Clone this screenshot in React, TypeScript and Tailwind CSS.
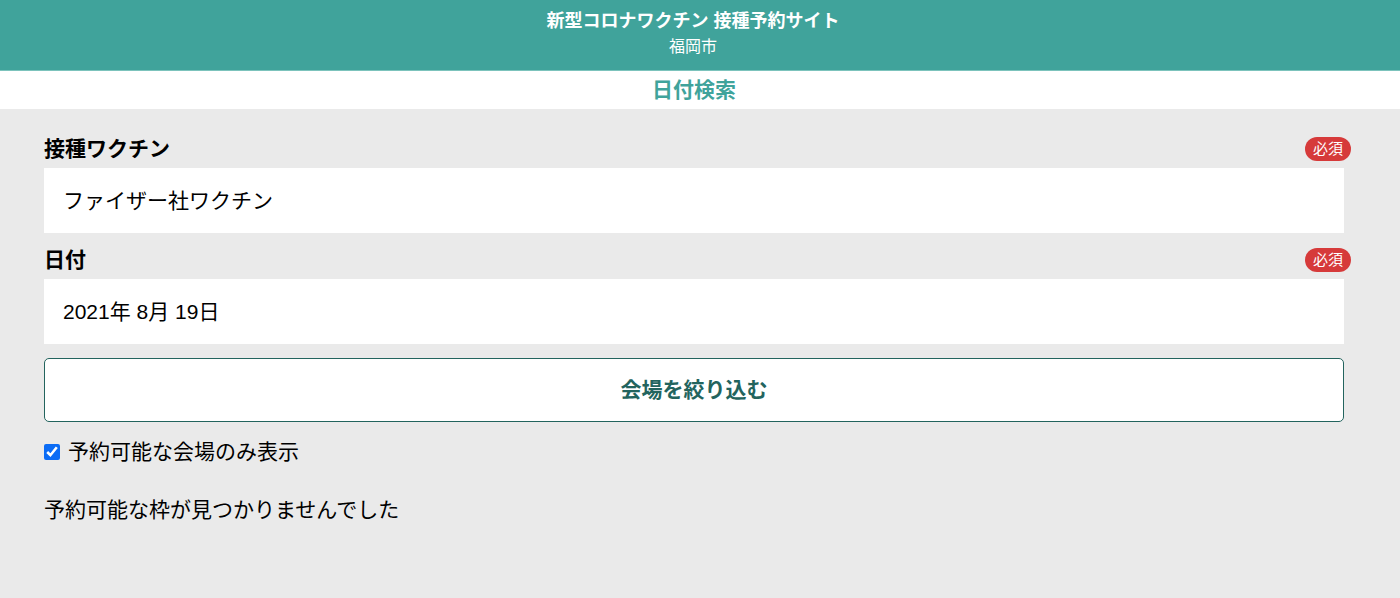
import React from "react";

const font = { fontFamily: '"Liberation Sans", "Noto Sans CJK JP", sans-serif' };

function Badge() {
  return (
    <span className="inline-flex h-[24px] w-[46px] items-center justify-center rounded-full bg-[#d63a3a] text-[15px] leading-none text-white">
      必須
    </span>
  );
}

function Field({ label, value }: { label: string; value: string }) {
  return (
    <div>
      <div className="flex h-[46px] items-end justify-between pb-[7px]">
        <span className="text-[21px] font-bold leading-[24px] text-black">{label}</span>
        <span className="mr-[-7px]">
          <Badge />
        </span>
      </div>
      <div className="flex h-[65px] items-center bg-white px-[19px] text-[21px] text-black">
        {value}
      </div>
    </div>
  );
}

export default function App() {
  return (
    <div className="min-h-screen bg-[#eaeaea]" style={font}>
      <header className="flex h-[71px] flex-col items-center border-b border-[#7cc3bc] bg-[#40a39b] pr-[14px] pt-[8px] text-white">
        <div className="text-[18px] font-bold leading-[26px]">新型コロナワクチン 接種予約サイト</div>
        <div className="mt-[3px] text-[16px] leading-[20px]">福岡市</div>
      </header>
      <div className="flex h-[38px] items-center justify-center bg-white pr-[12px] text-[21px] font-bold text-[#40a39b]">
        日付検索
      </div>
      <main className="px-[44px] pt-[13px]">
        <div className="w-[1300px]">
          <Field label="接種ワクチン" value="ファイザー社ワクチン" />
          <Field label="日付" value="2021年 8月 19日" />
          <button className="mt-[14px] flex h-[64px] w-full items-center justify-center rounded-[5px] border-[1.5px] border-[#23645e] bg-white text-[21px] font-bold text-[#23645e]">
            会場を絞り込む
          </button>
          <label className="mt-[15px] flex h-[30px] items-center text-[21px] text-black">
            <input
              type="checkbox"
              defaultChecked
              className="m-0 h-4 w-4 accent-[#0b6cf5]"
            />
            <span className="ml-[8px]">予約可能な会場のみ表示</span>
          </label>
          <p className="mt-[28px] text-[21px] leading-[30px] text-black">予約可能な枠が見つかりませんでした</p>
        </div>
      </main>
    </div>
  );
}
